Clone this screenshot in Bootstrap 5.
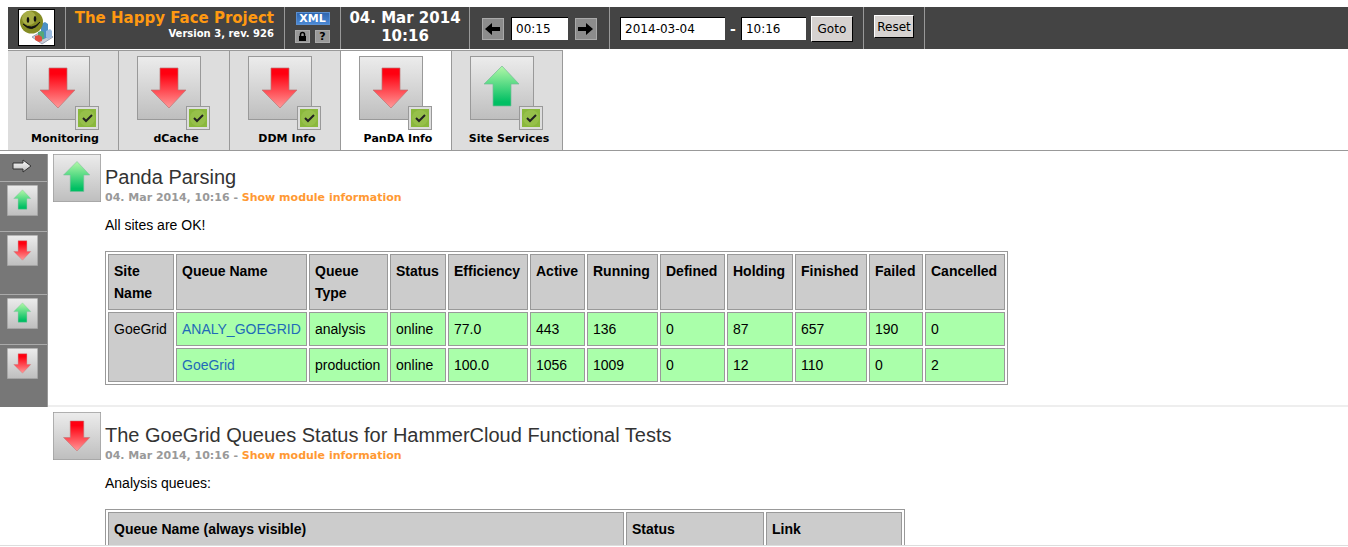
<!DOCTYPE html>
<html lang="en">
<head>
<meta charset="utf-8">
<meta name="viewport" content="width=device-width, initial-scale=1">
<title>The Happy Face Project</title>
<link href="https://cdn.jsdelivr.net/npm/bootstrap@5.3.0/dist/css/bootstrap.min.css" rel="stylesheet">
<style>
  body { font: 14px/22px "Liberation Sans", Arial, sans-serif; color: #000; background: #fff; }
  a { text-decoration: none; }
  .hf-ui { font-family: "DejaVu Sans", Verdana, sans-serif; }
  .hf-top { background: #444; color: #fff; margin: 7px 0 0 8px; min-height: 42px; }
  .hf-cell { border-right: 1px solid #999; }
  .hf-brand { width: 58px; padding: 2px 0 0 10px; }
  .hf-title { width: 219px; padding: 2px 10px 0 0; }
  .hf-links { width: 56px; padding-top: 5px; gap: 5px; }
  .hf-stepper { width: 140px; gap: 7px; padding-top: 1px; }
  .hf-goto { width: 254px; gap: 5px; padding-top: 1px; }
  .hf-reset { width: 61px; padding-top: 8px; }
  .hf-logo { width: 37px; height: 37px; border: 1px solid #000; background: #fff; display: block; }
  .hf-name { font-size: 15px; line-height: 18px; font-weight: bold; color: #ff9911; }
  .hf-rev { font-size: 10px; line-height: 14px; font-weight: bold; }
  .hf-date { font-size: 15px; line-height: 18px; font-weight: bold; width: 129px; padding-top: 2px; }
  .hf-xml { width: 34px; height: 13px; background: linear-gradient(#2f66b0, #4a88d4); border: 1px solid #5b8fd0; color: #fff; font-size: 11px; line-height: 12px; font-weight: bold; text-align: center; }
  .hf-mini { width: 15px; height: 13px; background: #999; border: 1px solid #aaa; color: #000; font-size: 11px; line-height: 12px; font-weight: bold; }
  .hf-mini svg, .hf-step svg { display: block; margin: auto; }
  .hf-step { width: 22px; height: 22px; padding: 0; background: #8c8c8c; border: 1px solid #aaa; }
  .hf-field { height: 23px; padding: 0 4px; font-size: 12px; color: #000; background: #fff; border: solid #000; border-width: 1px 0 0 1px; border-radius: 0; }
  .hf-push { width: 42px; height: 26px; padding: 0; font-size: 12px; line-height: 20px; color: #000; background: #d6d2d0; border: 1px solid; border-color: #fff #000 #000 #fff; border-radius: 0; }
  .hf-reset .hf-push { height: 23px; width: 40px; }
  .hf-tabs { margin-top: 1px; padding-left: 8px; border-bottom: 1px solid #999; }
  .hf-tab { width: 111px; height: 100px; padding: 5px 2px 0 0; background: #ddd; border: solid #999; border-width: 1px 1px 0 0; color: #000; font-size: 11px; font-weight: bold; line-height: 18px; }
  .hf-tab.active { background: #fff; }
  .hf-tab:hover { color: #000; }
  .hf-label { padding-left: 6px; }
  .hf-state { width: 73px; height: 74px; }
  .hf-state svg { display: block; }
  .hf-check { right: 0; bottom: 0; }
  .hf-main { padding-top: 3px; min-height: 0; }
  .hf-side { width: 48px; background: #777; border-right: 1px solid #999; }
  .hf-side a { display: block; padding: 3px 0 0 7px; border-top: 1px solid #aaa; }
  .hf-side a:first-child { border: 0; padding: 4px 0 0 12px; height: 27px; }
  .hf-side svg { display: block; }
  .hf-short { height: 50px; }
  .hf-long { height: 63px; }
  .hf-module { padding-left: 5px; padding-bottom: 20px; border-bottom: 2px solid #eee; margin-bottom: 5px; gap: 4px; }
  .hf-module h2 { font-size: 20px; line-height: 24px; font-weight: normal; color: #333; margin: 0; padding-top: 11px; }
  .hf-info { font-size: 11px; line-height: 18px; font-weight: bold; color: #999; margin-bottom: 7px; }
  .hf-info a { color: #ff9933; }
  .hf-module p { margin-bottom: 15px; }
  .hf-data { border: 1px solid #999; border-collapse: separate; border-spacing: 2px; table-layout: fixed; }
  .hf-data th, .hf-data td { border: 1px solid #999; padding: 5px; vertical-align: top; }
  .hf-data th, .hf-data .hf-site { background: #ccc; }
  .hf-data td { background: #aaffaa; }
  .hf-data a { color: #1f6bb8; }
  .hf-queues { width: 903px; }
  .hf-tests { width: 800px; }
  .hf-foot { height: 2px; border-top: 1px solid #ddd; }
</style>
</head>
<body class="vh-100 d-flex flex-column overflow-hidden">

<svg width="0" height="0" class="position-absolute" aria-hidden="true">
  <defs>
    <linearGradient id="plate" x2="0" y2="1"><stop stop-color="#ececec"/><stop offset="1" stop-color="#bebebe"/></linearGradient>
    <linearGradient id="redfill" x2="0" y2="1"><stop offset=".15" stop-color="#ff0010"/><stop offset="1" stop-color="#ff9999"/></linearGradient>
    <linearGradient id="greenfill" x2="0" y2="1"><stop stop-color="#b4f8a8"/><stop offset=".9" stop-color="#00bf63"/></linearGradient>
    <linearGradient id="grayfill" x2="0" y2="1"><stop stop-color="#fff"/><stop offset="1" stop-color="#bbb"/></linearGradient>
    <symbol id="bad" viewBox="0 0 64 64"><rect x=".5" y=".5" width="63" height="63" fill="url(#plate)" stroke="#999"/><path d="M23 12H41V34H49L32 52L14 34H23Z" fill="url(#redfill)" stroke="#b77" stroke-width=".7"/></symbol>
    <symbol id="good" viewBox="0 0 64 64"><rect x=".5" y=".5" width="63" height="63" fill="url(#plate)" stroke="#999"/><path d="M32 10L49 28H41V50H23V28H14Z" fill="url(#greenfill)" stroke="#7b9" stroke-width=".7"/></symbol>
    <symbol id="check" viewBox="0 0 24 24"><rect x=".5" y=".5" width="23" height="23" fill="#ddd" stroke="#999"/><rect x="3" y="3" width="18" height="18" fill="#8ab83c"/><circle cx="12" cy="12" r="8" fill="#96c04a"/><path d="M8 12L11 15L17 9" fill="none" stroke="#222" stroke-width="2"/></symbol>
  </defs>
</svg>

<header class="hf-top hf-ui d-flex flex-shrink-0">
  <div class="hf-cell hf-brand">
    <svg class="hf-logo" viewBox="0 0 35 35" role="img" aria-label="Happy Face">
      <path d="M13 27L25 20L34 27L23 34Z" fill="#c6cbd6" stroke="#9aa3b5"/>
      <path d="M22 14L26 12L29 14V27L25 29L22 27Z" fill="#4d91c4"/><path d="M27 21L31 19L33 21V27L29 29L27 27Z" fill="#9bbce0"/>
      <path d="M19 22L22 21L25 22V29L22 30L19 28Z" fill="#55a878"/><path d="M16 26L20 25L23 27V31L20 32L16 30Z" fill="#e04f3f"/>
      <circle cx="12.500" cy="12" r="11.500" fill="#858c24"/><circle cx="10" cy="8" r="7" fill="#b5bb55" opacity=".7"/>
      <ellipse cx="9" cy="10" rx="1.300" ry="3" fill="#111"/><ellipse cx="16" cy="9" rx="1.300" ry="3" fill="#111"/>
      <path d="M4 14Q13 24 21 12Q13 21 4 14Z" fill="#111" stroke="#111"/>
    </svg>
  </div>
  <div class="hf-cell hf-title text-end">
    <div class="hf-name">The Happy Face Project</div>
    <div class="hf-rev">Version 3, rev. 926</div>
  </div>
  <div class="hf-cell hf-links d-flex flex-column align-items-center">
    <a href="#" class="hf-xml">XML</a>
    <div class="d-flex" style="gap:5px">
      <a href="#" class="hf-mini d-block" aria-label="Secure login"><svg width="11" height="11" viewBox="0 0 11 11"><path d="M3.500 5V3.500a2 2 0 0 1 4 0V5" fill="none" stroke="#000" stroke-width="1.500"/><path d="M2 5H9V10H2Z"/></svg></a>
      <a href="#" class="hf-mini d-block text-center">?</a>
    </div>
  </div>
  <div class="hf-cell hf-date text-center">04. Mar 2014<br>10:16</div>
  <form class="hf-cell hf-stepper d-flex align-items-center justify-content-center">
    <button type="button" class="hf-step" aria-label="Back"><svg width="16" height="12" viewBox="0 0 16 12"><path d="M0 6L7 0V4H15V8H7V12Z"/></svg></button>
    <input class="hf-field" style="width:57px" value="00:15" aria-label="Time step">
    <button type="button" class="hf-step" aria-label="Forward"><svg width="16" height="12" viewBox="0 0 16 12"><path d="M15 6L8 0V4H0V8H8V12Z"/></svg></button>
  </form>
  <form class="hf-cell hf-goto d-flex align-items-center justify-content-center">
    <input class="hf-field" style="width:105px" value="2014-03-04" aria-label="Date">
    <b>-</b>
    <input class="hf-field" style="width:65px" value="10:16" aria-label="Time">
    <button type="button" class="hf-push">Goto</button>
  </form>
  <form class="hf-cell hf-reset d-flex justify-content-center align-items-start">
    <button type="button" class="hf-push">Reset</button>
  </form>
</header>

<nav class="hf-tabs hf-ui d-flex flex-shrink-0">
  <a href="#" class="hf-tab text-center"><div class="hf-state position-relative mx-auto"><svg width="64" height="64"><use href="#bad"/></svg><svg class="hf-check position-absolute" width="24" height="24"><use href="#check"/></svg></div><div class="hf-label">Monitoring</div></a>
  <a href="#" class="hf-tab text-center"><div class="hf-state position-relative mx-auto"><svg width="64" height="64"><use href="#bad"/></svg><svg class="hf-check position-absolute" width="24" height="24"><use href="#check"/></svg></div><div class="hf-label">dCache</div></a>
  <a href="#" class="hf-tab text-center"><div class="hf-state position-relative mx-auto"><svg width="64" height="64"><use href="#bad"/></svg><svg class="hf-check position-absolute" width="24" height="24"><use href="#check"/></svg></div><div class="hf-label">DDM Info</div></a>
  <a href="#" class="hf-tab active text-center" aria-current="page"><div class="hf-state position-relative mx-auto"><svg width="64" height="64"><use href="#bad"/></svg><svg class="hf-check position-absolute" width="24" height="24"><use href="#check"/></svg></div><div class="hf-label">PanDA Info</div></a>
  <a href="#" class="hf-tab text-center"><div class="hf-state position-relative mx-auto"><svg width="64" height="64"><use href="#good"/></svg><svg class="hf-check position-absolute" width="24" height="24"><use href="#check"/></svg></div><div class="hf-label">Site Services</div></a>
</nav>

<div class="hf-main d-flex flex-fill align-items-start overflow-hidden">
  <aside class="hf-side flex-shrink-0">
    <a href="#" aria-label="Expand"><svg width="20" height="16" viewBox="0 0 20 16"><path d="M1 5H11V2L19 8L11 14V11H1Z" fill="url(#grayfill)" stroke="#333"/></svg></a>
    <a href="#" class="hf-short" aria-label="Panda Parsing"><svg width="31" height="31"><use href="#good"/></svg></a>
    <a href="#" class="hf-long" aria-label="HammerCloud Functional Tests"><svg width="31" height="31"><use href="#bad"/></svg></a>
    <a href="#" class="hf-short" aria-label="Module 3"><svg width="31" height="31"><use href="#good"/></svg></a>
    <a href="#" class="hf-long" aria-label="Module 4"><svg width="31" height="31"><use href="#bad"/></svg></a>
  </aside>
  <main class="flex-fill">
    <section class="hf-module d-flex">
      <svg class="flex-shrink-0" width="48" height="48"><use href="#good"/></svg>
      <div>
        <h2>Panda Parsing</h2>
        <div class="hf-info hf-ui">04. Mar 2014, 10:16 - <a href="#">Show module information</a></div>
        <p>All sites are OK!</p>
        <table class="hf-data hf-queues">
          <colgroup><col style="width:66px"><col style="width:131px"><col style="width:79px"><col style="width:56px"><col style="width:80px"><col style="width:55px"><col style="width:71px"><col style="width:65px"><col style="width:66px"><col style="width:72px"><col style="width:54px"><col style="width:80px"></colgroup>
          <thead><tr><th>Site Name</th><th>Queue Name</th><th>Queue Type</th><th>Status</th><th>Efficiency</th><th>Active</th><th>Running</th><th>Defined</th><th>Holding</th><th>Finished</th><th>Failed</th><th>Cancelled</th></tr></thead>
          <tbody>
            <tr><td class="hf-site" rowspan="2">GoeGrid</td><td><a href="#">ANALY_GOEGRID</a></td><td>analysis</td><td>online</td><td>77.0</td><td>443</td><td>136</td><td>0</td><td>87</td><td>657</td><td>190</td><td>0</td></tr>
            <tr><td><a href="#">GoeGrid</a></td><td>production</td><td>online</td><td>100.0</td><td>1056</td><td>1009</td><td>0</td><td>12</td><td>110</td><td>0</td><td>2</td></tr>
          </tbody>
        </table>
      </div>
    </section>
    <section class="hf-module d-flex">
      <svg class="flex-shrink-0" width="48" height="48"><use href="#bad"/></svg>
      <div>
        <h2>The GoeGrid Queues Status for HammerCloud Functional Tests</h2>
        <div class="hf-info hf-ui">04. Mar 2014, 10:16 - <a href="#">Show module information</a></div>
        <p>Analysis queues:</p>
        <table class="hf-data hf-tests">
          <colgroup><col style="width:516px"><col style="width:138px"><col></colgroup>
          <thead><tr><th>Queue Name (always visible)</th><th>Status</th><th>Link</th></tr></thead>
        </table>
      </div>
    </section>
  </main>
</div>
<footer class="hf-foot flex-shrink-0"></footer>

<script src="https://cdn.jsdelivr.net/npm/bootstrap@5.3.0/dist/js/bootstrap.bundle.min.js"></script>
</body>
</html>
